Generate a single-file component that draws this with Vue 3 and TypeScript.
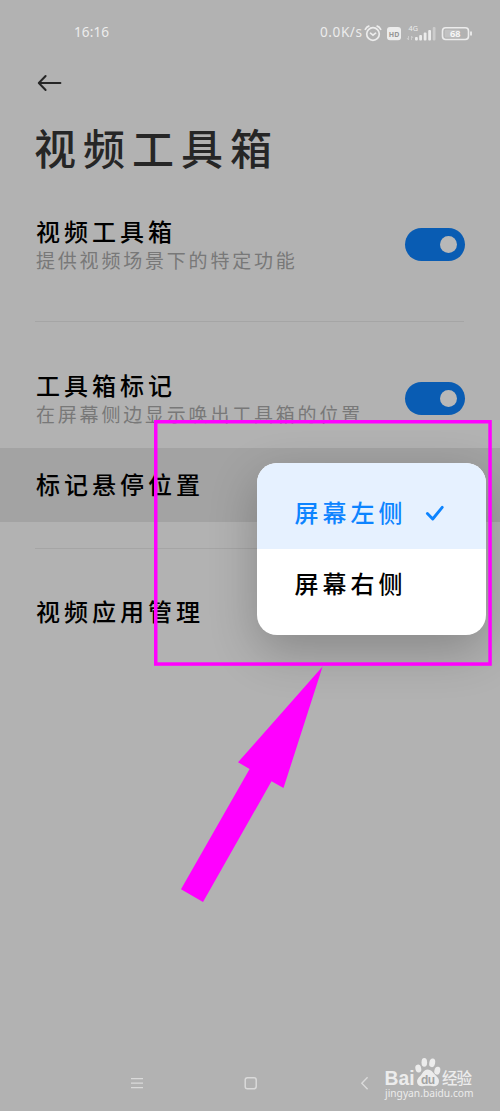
<script setup lang="ts">
import { ref } from 'vue'

interface Option {
  id: string
  label: string
}

const toolboxOn = ref(true)
const markerOn = ref(true)
const selected = ref('left')
const options: Option[] = [
  { id: 'left', label: '屏幕左侧' },
  { id: 'right', label: '屏幕右侧' },
]
</script>

<template>
  <main class="screen">
    <header class="status">
      <svg class="status-svg" width="500" height="66" viewBox="0 0 500 66">
        <g fill="#ececec">
          <text x="74" y="37.2" font-size="13.6" textLength="35">16:16</text>
          <text x="320" y="37.2" font-size="13.6" textLength="42">0.0K/s</text>
        </g>
        <g fill="none" stroke="#ececec" stroke-width="1.7" stroke-linecap="round">
          <circle cx="373" cy="34" r="6.3" />
          <path d="M365.3 29.3q1.3-2.4 3.5-3.2M380.7 29.3q-1.3-2.4-3.5-3.2M370.5 33.2l2.5 2 2.6-2" />
        </g>
        <rect x="387" y="27" width="14" height="13.3" rx="3" fill="#ececec" />
        <text x="388.8" y="36.5" font-size="7.8" font-weight="700" textLength="10.5" lengthAdjust="spacingAndGlyphs" fill="#959595">HD</text>
        <text x="408.5" y="31" font-size="7.2" textLength="9.5" fill="#ececec">4G</text>
        <path d="M408.5 36v4M407 38l1.5 2M411.5 40v-4M411.5 36l1.5 2" fill="none" stroke="#cfcfcf" stroke-width=".9" />
        <g fill="#ececec">
          <rect x="415" y="37" width="2.8" height="3.4" rx="1" />
          <rect x="419.2" y="35" width="2.8" height="5.4" rx="1" />
          <rect x="423.7" y="32.5" width="2.8" height="7.9" rx="1" />
          <rect x="428.2" y="30" width="2.8" height="10.4" rx="1" />
          <rect x="432.7" y="27" width="2.8" height="13.4" rx="1" opacity=".45" />
        </g>
        <rect x="442.5" y="27.7" width="26" height="11.8" rx="3.2" fill="none" stroke="#ececec" stroke-width="1.6" />
        <rect x="444.7" y="29.8" width="15" height="7.6" rx="1" fill="#c2c2c2" />
        <path d="M471 31.5v4" stroke="#ececec" stroke-width="1.8" />
        <text x="450" y="36.5" font-size="8.6" font-weight="600" textLength="10.5" lengthAdjust="spacingAndGlyphs" fill="#fafafa">68</text>
      </svg>
    </header>

    <nav class="back">
      <svg width="26" height="18" viewBox="0 0 26 18" fill="none" stroke="#262626" stroke-width="2" stroke-linecap="round" stroke-linejoin="round">
        <path d="M23.4 9H2M8.6 2L1.8 9L8.6 16" />
      </svg>
    </nav>

    <h1 class="title">视频工具箱</h1>

    <section class="row tall" @click="toolboxOn = !toolboxOn">
      <div class="copy">
        <div class="label">视频工具箱</div>
        <div class="hint">提供视频场景下的特定功能</div>
      </div>
      <span class="toggle" :class="{ on: toolboxOn }"><i class="knob"></i></span>
    </section>

    <hr class="rule first" />

    <section class="row tall" @click="markerOn = !markerOn">
      <div class="copy">
        <div class="label">工具箱标记</div>
        <div class="hint">在屏幕侧边显示唤出工具箱的位置</div>
      </div>
      <span class="toggle" :class="{ on: markerOn }"><i class="knob"></i></span>
    </section>

    <section class="row pressed">
      <div class="label">标记悬停位置</div>
    </section>

    <hr class="rule second" />

    <section class="row last">
      <div class="label">视频应用管理</div>
    </section>

    <footer class="keys">
      <svg class="key" width="14" height="14" viewBox="0 0 14 14" stroke="#dadada" stroke-width="1.3">
        <path d="M1 2.6h12M1 7.1h12M1 11.6h12" />
      </svg>
      <svg class="key" width="14" height="14" viewBox="0 0 14 14" fill="none" stroke="#dadada" stroke-width="1.5">
        <rect x="1.2" y="1.8" width="11" height="11" rx="2.2" />
      </svg>
      <svg class="key" width="14" height="14" viewBox="0 0 14 14" fill="none" stroke="#dadada" stroke-width="1.4">
        <path d="M10.6 1.2L4.8 7.2l5.8 6" />
      </svg>
    </footer>

    <div class="menu">
      <div
        v-for="o in options"
        :key="o.id"
        class="option"
        :class="{ active: selected === o.id }"
        @click="selected = o.id"
      >
        <span class="label">{{ o.label }}</span>
        <svg v-if="selected === o.id" class="check" width="20" height="16" viewBox="0 0 20 16" fill="none" stroke="#0d84ff" stroke-width="2.9" stroke-linecap="round" stroke-linejoin="round">
          <path d="M2.4 8.6L7.7 14L17.2 2.4" />
        </svg>
      </div>
    </div>

    <svg class="frame" width="340" height="248" viewBox="0 0 340 248">
      <rect x="2.75" y="2.75" width="334.3" height="242.3" fill="none" stroke="#ff00ff" stroke-width="3.5" />
    </svg>
    <svg class="pointer" width="144" height="238" viewBox="0 0 144 238">
      <path d="M142.6 .5L58 96.3L69.6 103L1 223.3L23 236L91.5 115.3L103.5 122Z" fill="#ff00ff" />
    </svg>

    <svg class="watermark" width="100" height="50" viewBox="0 0 100 50" fill="#ececec">
      <text class="brand" x="3.5" y="30.3" font-size="20" font-weight="700" textLength="30" lengthAdjust="spacingAndGlyphs">Bai</text>
      <ellipse cx="37.3" cy="13.6" rx="2.9" ry="4" transform="rotate(-14 37.3 13.6)" />
      <ellipse cx="43.3" cy="7.4" rx="2.8" ry="4.3" />
      <ellipse cx="51.2" cy="7.8" rx="2.9" ry="4.4" transform="rotate(12 51.2 7.8)" />
      <ellipse cx="56.3" cy="15.7" rx="2.9" ry="4" transform="rotate(15 56.3 15.7)" />
      <path fill-rule="evenodd" d="M46.5 14.5c4.3 0 5.9 3.8 8.5 6.2 2.7 2.5 3.4 4 2.8 6.8-.6 3-3 4-5.5 3.7-3.5-.5-7-.5-10.6 0-3 .3-5.2-1.2-5.6-4-.4-2.6 1-4.2 3.4-6.5 2.3-2.2 3-6.2 7-6.2z" />
      <text class="brand" x="40" y="28.6" font-size="12" font-weight="700" textLength="14" fill="#a2a2a2">du</text>
      <text x="61" y="29.3" font-size="15.5" font-weight="500" textLength="30">经验</text>
      <text class="url" x="4" y="41.8" font-size="10.2" textLength="88.5">jingyan.baidu.com</text>
    </svg>
  </main>
</template>

<style>
body {
  background: #b2b2b2;
}
</style>

<style scoped>
.screen {
  position: relative;
  width: 500px;
  height: 1111px;
  display: flex;
  flex-direction: column;
  overflow: hidden;
  background: #b2b2b2;
  color: #000;
  font-family: "Noto Sans", "Noto Sans CJK SC", sans-serif;
}
.status,
.status-svg {
  display: block;
  height: 66px;
  flex: none;
}
.back {
  display: flex;
  align-items: center;
  height: 34px;
  padding-left: 37px;
}
.title {
  margin: 0;
  height: 98px;
  padding-left: 34px;
  font-size: 42px;
  font-weight: 500;
  line-height: 98px;
  letter-spacing: 7px;
  color: #262626;
  white-space: nowrap;
}
.row {
  display: flex;
  align-items: center;
  justify-content: space-between;
  flex: none;
  box-sizing: border-box;
  padding: 0 35px 0 36px;
  white-space: nowrap;
}
.tall {
  height: 93px;
}
.copy {
  padding-top: 1px;
}
.label {
  font-size: 24px;
  font-weight: 500;
  line-height: 32px;
  letter-spacing: 4px;
}
.hint {
  font-size: 19px;
  line-height: 27px;
  letter-spacing: 2.8px;
  color: #787878;
}
.toggle {
  display: flex;
  align-items: center;
  flex: none;
  box-sizing: border-box;
  width: 60px;
  height: 33px;
  padding: 0 8px;
  border-radius: 17px;
  background: #999;
}
.toggle.on {
  justify-content: flex-end;
  background: #095cb3;
}
.knob {
  width: 17px;
  height: 17px;
  border-radius: 50%;
  background: #b8b8b8;
}
.rule {
  flex: none;
  width: 429px;
  height: 1px;
  border: 0;
  background: #a5a5a5;
}
.rule.first {
  margin: 30px 0 30px 35px;
}
.rule.second {
  margin: 26px 0 26px 35px;
}
.pressed {
  height: 74px;
  margin-top: 3px;
  background: #a3a3a3;
}
.last {
  height: 74px;
}
.keys {
  display: flex;
  justify-content: space-between;
  align-items: center;
  height: 56px;
  margin-top: auto;
  padding: 0 129px 0 130px;
}
.menu {
  position: absolute;
  left: 256.5px;
  top: 462.5px;
  width: 229.5px;
  height: 172.5px;
  border-radius: 20px;
  overflow: hidden;
  background: #fff;
  box-shadow: 0 16px 48px rgba(0, 0, 0, 0.24);
}
.option {
  display: flex;
  align-items: center;
  box-sizing: border-box;
  height: 86.25px;
  padding: 0 40px 15px 38px;
}
.option.active {
  padding: 15px 40px 0 38px;
  background: #e6f1ff;
  color: #0d84ff;
}
.check {
  margin-left: 18px;
}
.frame {
  position: absolute;
  left: 153px;
  top: 419px;
}
.pointer {
  position: absolute;
  left: 180px;
  top: 666px;
}
.watermark {
  position: absolute;
  left: 381px;
  top: 1055px;
}
.brand {
  font-family: "Liberation Sans", sans-serif;
}
</style>
